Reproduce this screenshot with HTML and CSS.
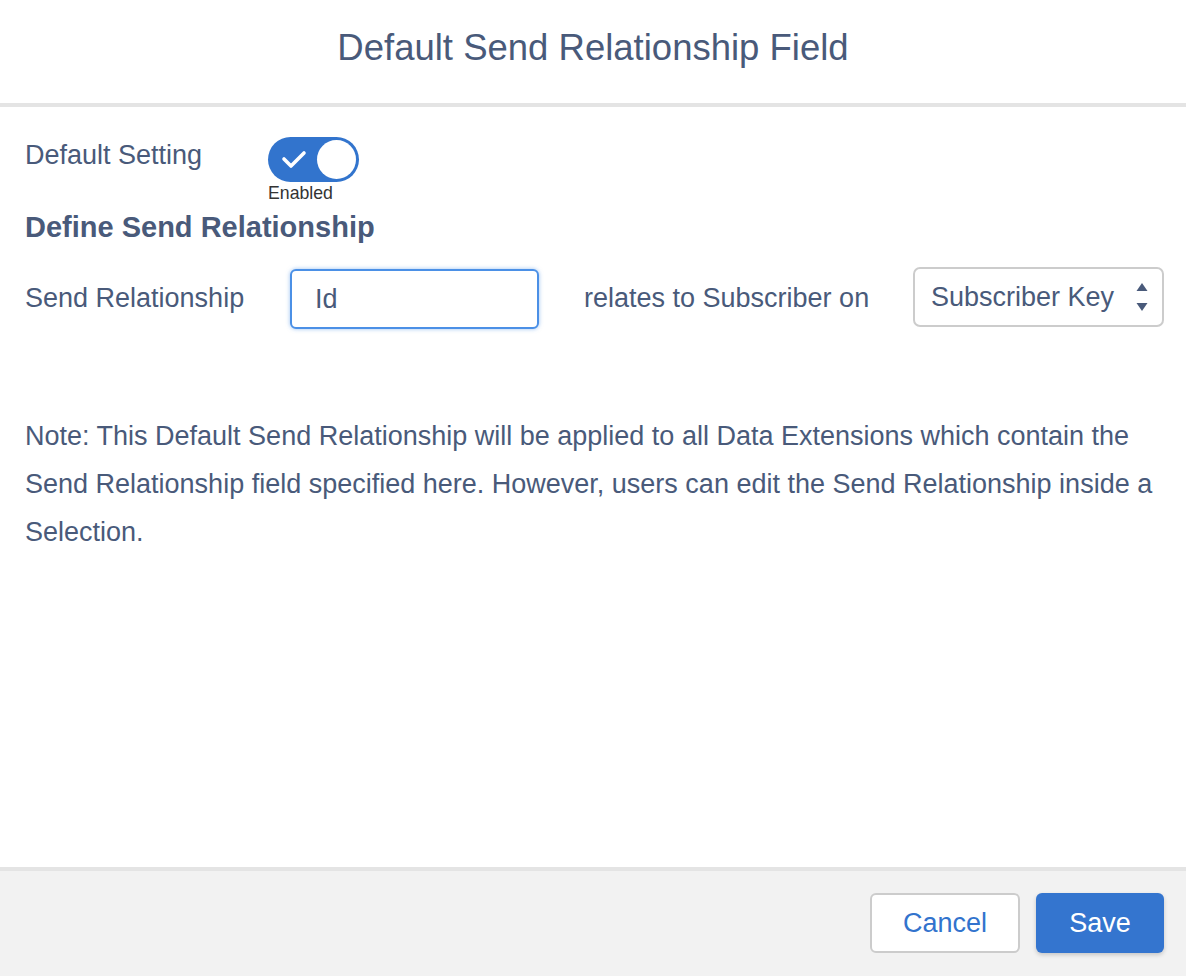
FILE: index.html
```html
<!DOCTYPE html>
<html lang="en">
<head>
<meta charset="utf-8">
<title>Default Send Relationship Field</title>
<link rel="stylesheet" href="styles.css">
</head>
<body>
<div class="modal">
  <header class="modal-header">
    <h1 class="modal-title">Default Send Relationship Field</h1>
  </header>
  <main class="modal-body">
    <div class="setting-row">
      <span class="setting-label">Default Setting</span>
      <div class="toggle-wrap">
        <span class="toggle">
          <svg class="toggle-check" width="26" height="20" viewBox="0 0 26 20"><polyline points="3,9 10,16 23,3" fill="none" stroke="#fff" stroke-width="3.6" stroke-linecap="round" stroke-linejoin="round"/></svg>
          <span class="toggle-knob"></span>
        </span>
        <span class="toggle-caption">Enabled</span>
      </div>
    </div>
    <h2 class="section-title">Define Send Relationship</h2>
    <div class="relation-row">
      <span class="relation-label">Send Relationship</span>
      <div class="text-input">Id</div>
      <span class="relation-text">relates to Subscriber on</span>
      <div class="select">
        <span class="select-value">Subscriber Key</span>
        <svg class="select-arrows" width="14" height="32" viewBox="0 0 14 32"><polygon points="7,1 12.5,9 1.5,9" fill="#495a7a"/><polygon points="1.5,21 12.5,21 7,29" fill="#495a7a"/></svg>
      </div>
    </div>
    <p class="note">Note: This Default Send Relationship will be applied to all Data Extensions which contain the Send Relationship field specified here. However, users can edit the Send Relationship inside a Selection.</p>
  </main>
  <footer class="modal-footer">
    <button class="btn btn-neutral">Cancel</button>
    <button class="btn btn-brand">Save</button>
  </footer>
</div>
</body>
</html>
```

FILE: styles.css
```css
* {
  box-sizing: border-box;
}

html, body {
  margin: 0;
  padding: 0;
  background: #ffffff;
}

body {
  font-family: "Liberation Sans", Arial, Helvetica, sans-serif;
  color: #495a7a;
}

.modal {
  display: flex;
  flex-direction: column;
  height: 976px;
}

.modal-header {
  height: 107px;
  padding-top: 27px;
  border-bottom: 4px solid #e4e4e4;
}

.modal-title {
  margin: 0;
  font-size: 36.5px;
  line-height: 42px;
  font-weight: 400;
  text-align: center;
  color: #495a7a;
}

.modal-body {
  flex: 1;
  padding: 30px 22px 0 25px;
}

.setting-row {
  display: flex;
  align-items: flex-start;
}

.setting-label {
  flex: 0 0 243px;
  margin-top: 3px;
  font-size: 27px;
  line-height: 30px;
}

.toggle-wrap {
  display: flex;
  flex-direction: column;
  align-items: flex-start;
}

.toggle {
  position: relative;
  display: flex;
  align-items: center;
  width: 91px;
  height: 45px;
  border-radius: 23px;
  background: #3274cd;
  padding-left: 13px;
}

.toggle-check {
  display: block;
}

.toggle-knob {
  position: absolute;
  right: 3px;
  top: 3px;
  width: 39px;
  height: 39px;
  border-radius: 50%;
  background: #ffffff;
}

.toggle-caption {
  margin-top: 1px;
  font-size: 17.7px;
  line-height: 20px;
  color: #333333;
}

.section-title {
  margin: 7px 0 0 0;
  font-size: 29px;
  line-height: 34px;
  font-weight: 700;
  color: #495a7a;
}

.relation-row {
  display: flex;
  align-items: center;
  height: 62px;
  margin-top: 23px;
  font-size: 27px;
}

.relation-label {
  flex: 0 0 265px;
}

.text-input {
  flex: 0 0 249px;
  height: 60px;
  margin-top: 2px;
  display: flex;
  align-items: center;
  padding-left: 23px;
  border: 2px solid #4b90e6;
  border-radius: 6px;
  box-shadow: 0 0 4px rgba(75, 144, 230, 0.55);
  background: #ffffff;
}

.relation-text {
  margin-left: 45px;
  width: 285px;
  white-space: nowrap;
}

.select {
  margin-left: 44px;
  align-self: flex-start;
  flex: 0 0 251px;
  height: 60px;
  display: flex;
  align-items: center;
  justify-content: space-between;
  padding: 0 13px 0 16px;
  border: 2px solid #cccccc;
  border-radius: 7px;
  background: #ffffff;
}

.select-arrows {
  display: block;
  margin-top: 2px;
}

.note {
  margin: 83px 0 0 0;
  font-size: 27px;
  line-height: 48px;
}

.modal-footer {
  height: 109px;
  border-top: 4px solid #e4e4e4;
  background: #f2f2f2;
  display: flex;
  justify-content: flex-end;
  align-items: flex-start;
  gap: 16px;
  padding: 22px 22px 0 0;
}

.btn {
  height: 60px;
  border-radius: 6px;
  font-family: "Liberation Sans", Arial, Helvetica, sans-serif;
  font-size: 27px;
  cursor: pointer;
}

.btn-neutral {
  width: 150px;
  background: #ffffff;
  border: 2px solid #cccccc;
  color: #3273cd;
}

.btn-brand {
  width: 128px;
  background: #3475cf;
  border: 0;
  color: #ffffff;
  box-shadow: 0 2px 4px rgba(0, 0, 0, 0.18);
}
```
